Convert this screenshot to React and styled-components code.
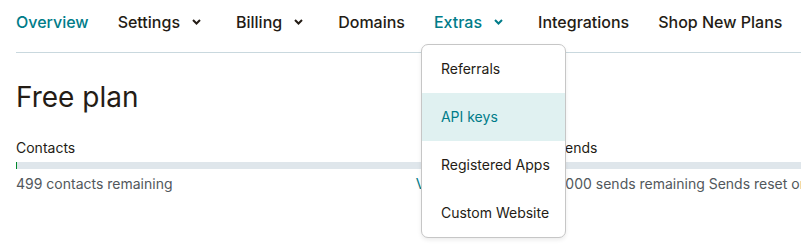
import React from 'react';
import styled, { createGlobalStyle } from 'styled-components';

const GlobalStyle = createGlobalStyle`
  html {
    overflow: hidden;
  }
  body {
    margin: 0;
    background: #ffffff;
    font-family: Inter, "Liberation Sans", sans-serif;
    color: #241c15;
  }
`;

const Page = styled.div`
  width: 1100px;
  min-height: 252px;
  padding: 0 0 0 16px;
`;

const Nav = styled.nav`
  display: flex;
  align-items: center;
  gap: 29px;
  height: 44px;
  padding-bottom: 8px;
  border-bottom: 1px solid #c9d8de;
`;

const NavItem = styled.div`
  position: relative;
  display: flex;
  align-items: center;
  gap: 12px;
  padding-right: ${p => (p.$menu ? '6px' : '0')};
  font-size: 16px;
  font-weight: 500;
  color: ${p => (p.$active ? '#007c89' : '#241c15')};
  white-space: nowrap;
  line-height: 44px;
`;

const Chevron = ({ color }) => (
  <svg width="9" height="6" viewBox="0 0 9 6" aria-hidden="true">
    <path d="M1 1l3.5 3.5L8 1" fill="none" stroke={color} strokeWidth="2" />
  </svg>
);

const Menu = styled.ul`
  position: absolute;
  top: 44px;
  left: -13px;
  width: 143px;
  margin: 0;
  padding: 0;
  list-style: none;
  background: #ffffff;
  border: 1px solid #c6c6c6;
  border-radius: 7px;
  box-shadow: 0 2px 4px rgba(0, 0, 0, 0.08);
  overflow: hidden;
  z-index: 5;
`;

const MenuItem = styled.li`
  height: 48px;
  display: flex;
  align-items: center;
  padding-left: 19px;
  font-size: 14px;
  font-weight: 400;
  line-height: 1;
  color: ${p => (p.$active ? '#007c89' : '#241c15')};
  background: ${p => (p.$active ? '#e0f1f1' : 'transparent')};
`;

const Title = styled.h1`
  margin: 28px 0 0;
  font-size: 28px;
  font-weight: 400;
  line-height: 32px;
  color: #241c15;
`;

const Usage = styled.div`
  display: grid;
  grid-template-columns: 524px 524px;
  gap: 16px;
  margin-top: 26px;
`;

const Meter = styled.div`
  display: flex;
  flex-direction: column;
`;

const Label = styled.div`
  font-size: 14px;
  line-height: 18px;
  color: #241c15;
`;

const Track = styled.div`
  height: 7px;
  margin-top: 5px;
  background: #dfe6eb;
`;

const Fill = styled.div`
  height: 100%;
  background: #00892c;
`;

const Footer = styled.div`
  display: flex;
  justify-content: space-between;
  margin-top: 6px;
  font-size: 14px;
  line-height: 18px;
  color: #52585c;
  white-space: nowrap;
`;

const Link = styled.span`
  color: #007c89;
`;

const menuItems = ['Referrals', 'API keys', 'Registered Apps', 'Custom Website'];

export default function App() {
  return (
    <Page>
      <GlobalStyle />
      <Nav>
        <NavItem $active>Overview</NavItem>
        <NavItem $menu>
          Settings <Chevron color="#241c15" />
        </NavItem>
        <NavItem $menu>
          Billing <Chevron color="#241c15" />
        </NavItem>
        <NavItem>Domains</NavItem>
        <NavItem $active $menu>
          Extras <Chevron color="#007c89" />
          <Menu>
            {menuItems.map(item => (
              <MenuItem key={item} $active={item === 'API keys'}>
                {item}
              </MenuItem>
            ))}
          </Menu>
        </NavItem>
        <NavItem>Integrations</NavItem>
        <NavItem>Shop New Plans</NavItem>
      </Nav>
      <Title>Free plan</Title>
      <Usage>
        <Meter>
          <Label>Contacts</Label>
          <Track>
            <Fill style={{ width: `${(1 / 500) * 100}%` }} />
          </Track>
          <Footer>
            <span>499 contacts remaining</span>
            <Link>View contact limits</Link>
          </Footer>
        </Meter>
        <Meter>
          <Label>Sends</Label>
          <Track>
            <Fill style={{ width: '0%' }} />
          </Track>
          <Footer>
            <span>1,000 sends remaining Sends reset on the 1st of each month</span>
          </Footer>
        </Meter>
      </Usage>
    </Page>
  );
}
